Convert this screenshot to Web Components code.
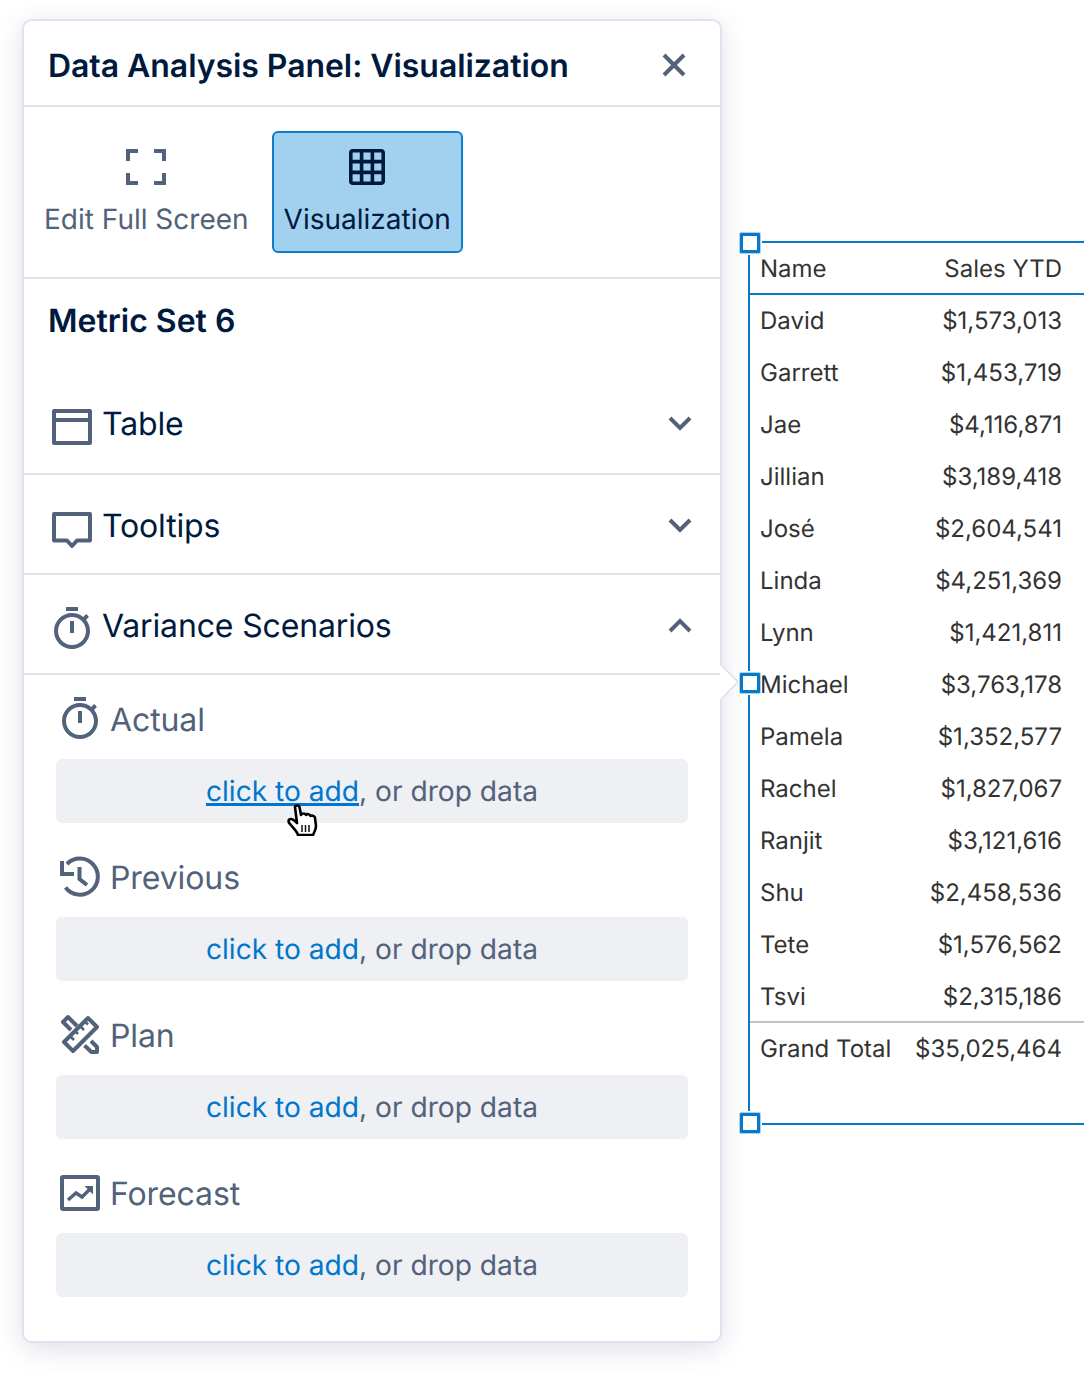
<!DOCTYPE html>
<html lang="en">
<head>
<meta charset="utf-8">
<title>Data Analysis Panel</title>
<style>
html, body {
    margin: 0;
    height: 1382px;
    overflow: hidden;
    background: #fff;
    font-family: Inter, "Liberation Sans", sans-serif;
    text-rendering: geometricPrecision;
}
</style>
</head>
<body>
<report-canvas>
    <analysis-panel heading="Data Analysis Panel: Visualization">
        <panel-toolbar>
            <tool-button icon="fullscreen" label="Edit Full Screen"></tool-button>
            <tool-button icon="grid" label="Visualization" active></tool-button>
        </panel-toolbar>
        <metric-title>Metric Set 6</metric-title>
        <panel-section icon="table" label="Table" style="padding-top:0;padding-bottom:1px"></panel-section>
        <panel-section icon="tooltip" label="Tooltips"></panel-section>
        <panel-section icon="timer-low" label="Variance Scenarios" open></panel-section>
        <scenario-list>
            <scenario-slot icon="timer" label="Actual" hover style="padding-top:0"></scenario-slot>
            <scenario-slot icon="history" label="Previous"></scenario-slot>
            <scenario-slot icon="plan" label="Plan"></scenario-slot>
            <scenario-slot icon="forecast" label="Forecast"></scenario-slot>
        </scenario-list>
    </analysis-panel>
    <selection-frame>
        <sales-table></sales-table>
    </selection-frame>
</report-canvas>

<script>
const ICONS = {
    close: '<path d="M14 14L34 34M34 14L14 34" fill="none" stroke="currentColor" stroke-width="4"/>',
    fullscreen: '<path d="M6 18V8H16M32 8H42V18M42 30V40H32M16 40H6V30" fill="none" stroke="currentColor" stroke-width="4"/>',
    grid: '<g transform="translate(2.4 2.4) scale(1.8)"><path fill="currentColor" d="M20 2H4c-1.1 0-2 .9-2 2v16c0 1.1.9 2 2 2h16c1.1 0 2-.9 2-2V4c0-1.1-.9-2-2-2zM8 20H4v-4h4v4zm0-6H4v-4h4v4zm0-6H4V4h4v4zm6 12h-4v-4h4v4zm0-6h-4v-4h4v4zm0-6h-4V4h4v4zm6 12h-4v-4h4v4zm0-6h-4v-4h4v4zm0-6h-4V4h4v4z"/></g>',
    table: '<g fill="none" stroke="currentColor" stroke-width="4" stroke-linejoin="round"><rect x="6" y="11" width="36" height="32"/><path d="M6 20H42"/></g>',
    tooltip: '<path d="M6 12H42V38.5H29L24 44L19 38.5H6Z" fill="none" stroke="currentColor" stroke-width="4" stroke-linejoin="round"/>',
    timer: '<g transform="scale(2)"><path fill="currentColor" d="M15 1H9v2h6V1zm-4 13h2V8h-2v6zm8.03-6.61l1.42-1.42c-.43-.51-.9-.99-1.41-1.41l-1.42 1.42C16.07 4.74 14.12 4 12 4c-4.97 0-9 4.03-9 9s4.02 9 9 9 9-4.03 9-9c0-2.12-.74-4.07-1.97-5.61zM12 20c-3.87 0-7-3.13-7-7s3.13-7 7-7 7 3.13 7 7-3.13 7-7 7z"/></g>',
    'timer-low': '<g transform="translate(0 3) scale(2)"><path fill="currentColor" d="M15 1H9v2h6V1zm-4 13h2V8h-2v6zm8.03-6.61l1.42-1.42c-.43-.51-.9-.99-1.41-1.41l-1.42 1.42C16.07 4.74 14.12 4 12 4c-4.97 0-9 4.03-9 9s4.02 9 9 9 9-4.03 9-9c0-2.12-.74-4.07-1.97-5.61zM12 20c-3.87 0-7-3.13-7-7s3.13-7 7-7 7 3.13 7 7-3.13 7-7 7z"/></g>',
    history: '<g transform="translate(0 1)" fill="none" stroke="currentColor" stroke-width="4"><path d="M11 10A18 18 0 1 1 9.5 33.5"/><path d="M6 7V20H18"/><path d="M23.5 13V25L31 31"/></g>',
    plan: '<g transform="translate(0 1)" fill="none" stroke="currentColor" stroke-width="4" stroke-linejoin="round"><path d="M8 30L17 39L41 15L32 6Z"/><path d="M14 24L18 28M19 19L22 22M24 14L28 18M29 9.5L32 12.5" stroke-width="2.6"/><path d="M21 14L12 5L7 10L15 18"/><path d="M35 29L41 35V40H35.5L28.5 33.5"/></g>',
    forecast: '<g transform="translate(0 1)"><g fill="none" stroke="currentColor"><rect x="6" y="7" width="36" height="32" rx="1" stroke-width="4"/><path d="M12 30L20 23L26 27L35 18" stroke-width="3.4"/></g><path d="M28.5 16H37V24.5Z" fill="currentColor"/></g>',
    down: '<path d="M14 18L24 28L34 18" fill="none" stroke="currentColor" stroke-width="4"/>',
    up: '<path d="M14 29L24 19L34 29" fill="none" stroke="currentColor" stroke-width="4"/>'
};

function icon(name) {
    return `<svg viewBox="0 0 48 48" width="48" height="48" aria-hidden="true">${ICONS[name]}</svg>`;
}

class Base extends HTMLElement {
    constructor(html) {
        super();
        this.attachShadow({mode: 'open'}).innerHTML = html;
    }
}

customElements.define('report-canvas', class extends Base {
    constructor() {
        super(`<style>
:host { display: flex; align-items: flex-start; padding: 19px 0 0 22px; width: 1300px; }
</style><slot></slot>`);
    }
});

customElements.define('analysis-panel', class extends Base {
    constructor() {
        super(`<style>
:host {
    display: block; position: relative; box-sizing: border-box; width: 700px; height: 1324px; flex: none;
    background: #fff; border: 2px solid #e0e3ee; border-radius: 10px;
    box-shadow: 0 6px 26px rgba(50, 65, 105, .16);
}
header {
    display: flex; align-items: center; justify-content: space-between; box-sizing: content-box;
    height: 84px; padding: 0 22px 0 24px; border-bottom: 2px solid #e0e3ee;
    color: #001a3d; font-size: 32px; font-weight: 600; letter-spacing: -.06px;
}
header svg { color: #52627a; display: block; margin-top: 4px; }
#title { padding-top: 4px; }
.notch {
    position: absolute; left: 682px; top: 647px; width: 28px; height: 28px;
    background: #fff; border: solid #e0e3ee; border-width: 2px 2px 0 0;
    transform: rotate(45deg); box-sizing: border-box;
    clip-path: polygon(0 0, 100% 0, 100% 100%);
}
.cursor { position: absolute; left: 263px; top: 783px; filter: blur(.5px); }
</style>
<header><span id="title"></span>${icon('close')}</header>
<slot></slot>
<div class="notch"></div>
<svg class="cursor" width="34" height="32" viewBox="0 0 34 32" aria-hidden="true">
<path d="M8 3C8 1 12 1 12.5 3L14 11C15 9 18 9 19 11C20 9.5 23 10 23.5 12C25 11 28 12 28 14L29 22C29 26 27 28 26 31L11 31C10 27 6 24 3 20C1 18 1 15 4 15C6 15 8 17 10 19Z" fill="#fff" stroke="#000" stroke-width="2.6" stroke-linejoin="round"/>
<path d="M15 21V28M18.5 21V28M22 21V28" stroke="#111" stroke-width="1.5"/>
</svg>`);
    }
    connectedCallback() {
        this.shadowRoot.getElementById('title').textContent = this.getAttribute('heading');
    }
});

customElements.define('panel-toolbar', class extends Base {
    constructor() {
        super(`<style>
:host {
    display: flex; height: 170px; box-sizing: content-box;
    padding: 0 8px; border-bottom: 2px solid #e0e3ee; align-items: flex-start;
}
div { display: flex; gap: 11px; padding-top: 24px; }
</style><div><slot></slot></div>`);
    }
});

customElements.define('tool-button', class extends Base {
    constructor() {
        super(`<style>
:host {
    display: flex; flex-direction: column; align-items: center; box-sizing: border-box;
    height: 122px; padding: 10px 10px 0; border: 2px solid transparent; border-radius: 6px;
    color: #52627a; font-size: 28px; line-height: 34px;
}
:host([active]) { background: #a2d1f0; border-color: #0a7fd0; color: #001a3d; }
svg { display: block; margin-bottom: 11px; }
</style><span id="i"></span><span id="t"></span>`);
    }
    connectedCallback() {
        this.shadowRoot.getElementById('i').innerHTML = icon(this.getAttribute('icon'));
        this.shadowRoot.getElementById('t').textContent = this.getAttribute('label');
    }
});

customElements.define('metric-title', class extends Base {
    constructor() {
        super(`<style>
:host {
    display: block; height: 96px; padding: 22px 0 0 24px; box-sizing: border-box;
    color: #001a3d; font-size: 32px; font-weight: 600; line-height: 40px;
}
</style><slot></slot>`);
    }
});

customElements.define('panel-section', class extends Base {
    constructor() {
        super(`<style>
:host {
    display: flex; align-items: center; box-sizing: border-box; height: 100px;
    padding: 3px 16px 0 24px; border-bottom: 2px solid #e0e3ee;
    color: #001a3d; font-size: 32px;
}
svg { display: block; color: #52627a; }
#t { flex: 1; margin-left: 6px; letter-spacing: -.15px; }
</style><span id="i"></span><span id="t"></span><span id="c"></span>`);
    }
    connectedCallback() {
        const $ = id => this.shadowRoot.getElementById(id);
        $('i').innerHTML = icon(this.getAttribute('icon'));
        $('t').textContent = this.getAttribute('label');
        $('c').innerHTML = icon(this.hasAttribute('open') ? 'up' : 'down');
    }
});

customElements.define('scenario-list', class extends Base {
    constructor() {
        super(`<style>
:host { display: block; padding: 0 32px; }
</style><slot></slot>`);
    }
});

customElements.define('scenario-slot', class extends Base {
    constructor() {
        super(`<style>
:host { display: block; padding-top: 10px; color: #52627a; }
.head { display: flex; align-items: center; box-sizing: border-box; height: 84px; padding-top: 4px; font-size: 32px; }
svg { display: block; }
#t { margin-left: 6px; letter-spacing: -.1px; }
.drop {
    display: flex; align-items: center; justify-content: center; height: 64px;
    background: #eef0f4; border-radius: 6px; font-size: 28.15px;
}
a { color: #0077cc; text-decoration: none; }
:host([hover]) a { text-decoration: underline; text-decoration-thickness: 2.5px; text-underline-offset: 2px; }
</style>
<div class="head"><span id="i"></span><span id="t"></span></div>
<div class="drop"><span><a>click to add</a>, or drop data</span></div>`);
    }
    connectedCallback() {
        this.shadowRoot.getElementById('i').innerHTML = icon(this.getAttribute('icon'));
        this.shadowRoot.getElementById('t').textContent = this.getAttribute('label');
    }
});

customElements.define('selection-frame', class extends Base {
    constructor() {
        super(`<style>
:host {
    display: block; position: relative; flex: none; box-sizing: border-box;
    width: 340px; height: 884px; margin: 222px 0 0 26px;
    border: solid #0a78c8; border-width: 2px 0 2px 2px;
}
i {
    position: absolute; left: -10px; width: 20px; height: 20px; box-sizing: border-box;
    background: #fff; border: 3px solid #0a78c8; border-radius: 1px;
    box-shadow: 0 0 0 1px #a9d2ef, 0 0 0 2px #fff;
}
</style><slot></slot>
<i style="top:-10px"></i><i style="top:430px"></i><i style="top:870px"></i>`);
    }
});

const SALES = [
    ['David', '$1,573,013'], ['Garrett', '$1,453,719'], ['Jae', '$4,116,871'], ['Jillian', '$3,189,418'],
    ['José', '$2,604,541'], ['Linda', '$4,251,369'], ['Lynn', '$1,421,811'], ['Michael', '$3,763,178'],
    ['Pamela', '$1,352,577'], ['Rachel', '$1,827,067'], ['Ranjit', '$3,121,616'], ['Shu', '$2,458,536'],
    ['Tete', '$1,576,562'], ['Tsvi', '$2,315,186']
];

customElements.define('sales-table', class extends Base {
    constructor() {
        const row = (a, b, cls = 'row') => `<div class="${cls}"><span>${a}</span><span>${b}</span></div>`;
        super(`<style>
:host { display: block; color: #333; font-size: 24px; }
div { display: flex; justify-content: space-between; align-items: center; box-sizing: border-box; height: 52px; padding: 0 26px 0 10px; }
.row { padding-bottom: 2px; }
.head { height: 52px; border-bottom: 2px solid #0a78c8; }
.total { border-top: 2px solid #c4c4c4; margin-top: -2px; padding-top: 1px; }
</style>
${row('Name', 'Sales YTD', 'head')}
${SALES.map(r => row(r[0], r[1])).join('')}
${row('Grand Total', '$35,025,464', 'total')}`);
    }
});
</script>
</body>
</html>
